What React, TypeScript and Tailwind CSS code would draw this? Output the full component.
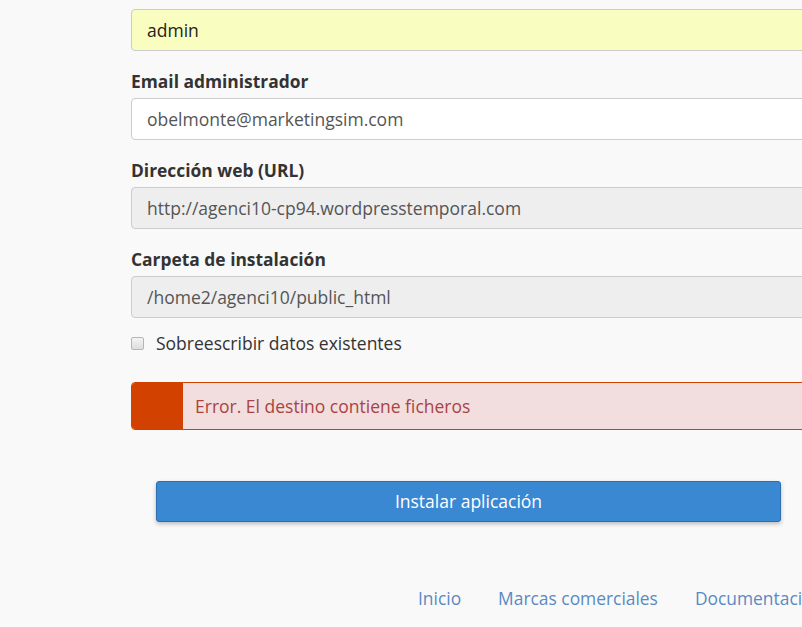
import React from "react";

const font = { fontFamily: '"Open Sans", "Noto Sans", sans-serif' };

function Label({ children }: { children: React.ReactNode }) {
  return (
    <div className="text-[17.4px] leading-[24px] font-bold text-[#333333] mb-[5px]">{children}</div>
  );
}

function Field({ value, tone }: { value: string; tone: "yellow" | "white" | "gray" }) {
  const bg =
    tone === "yellow" ? "bg-[#fafdc0]" : tone === "white" ? "bg-white" : "bg-[#eeeeee]";
  const color = tone === "yellow" ? "text-[#222222]" : "text-[#555555]";
  return (
    <div
      className={`h-[42px] flex items-center pl-[15px] border border-[#cccccc] rounded-[4px] text-[17.5px] ${bg} ${color}`}
    >
      {value}
    </div>
  );
}

export default function App() {
  return (
    <div className="w-[802px] h-[627px] overflow-hidden bg-[#f9f9f9]" style={font}>
      <div className="pl-[131px] pt-[9px]">
        <div className="w-[675px]">
          <Field value="admin" tone="yellow" />
          <div className="mt-[18px]">
            <Label>Email administrador</Label>
            <Field value="obelmonte@marketingsim.com" tone="white" />
          </div>
          <div className="mt-[18px]">
            <Label>Dirección web (URL)</Label>
            <Field value="http://agenci10-cp94.wordpresstemporal.com" tone="gray" />
          </div>
          <div className="mt-[18px]">
            <Label>Carpeta de instalación</Label>
            <Field value="/home2/agenci10/public_html" tone="gray" />
          </div>
          <div className="mt-[13px] flex items-center h-[24px] text-[17.5px] text-[#333333]">
            <span className="w-[13px] h-[13px] rounded-[2px] border border-[#b5b5b5] bg-gradient-to-b from-[#f4f4f4] to-[#dedede] mr-[12px]" />
            <span>Sobreescribir datos existentes</span>
          </div>
          <div className="mt-[27px] h-[48px] flex border border-[#d24100] rounded-[4px] overflow-hidden">
            <div className="w-[51px] bg-[#d24100]" />
            <div className="flex-1 bg-[#f2dede] flex items-center pl-[12px] text-[17.5px] text-[#a94442]">
              Error. El destino contiene ficheros
            </div>
          </div>
          <div className="mt-[51px] px-[25px]">
            <div className="h-[41px] bg-[#3a88d2] border border-[#2c6eae] rounded-[3px] shadow-[0_2px_4px_rgba(0,0,0,0.25)] flex items-center justify-center text-white text-[17.5px]">
              Instalar aplicación
            </div>
          </div>
        </div>
      </div>
      <div className="mt-[64px] pl-[418px] flex gap-[37px] text-[17.4px] text-[#5b8ac2] whitespace-nowrap leading-[24px]">
        <span>Inicio</span>
        <span>Marcas comerciales</span>
        <span>Documentación</span>
      </div>
    </div>
  );
}
